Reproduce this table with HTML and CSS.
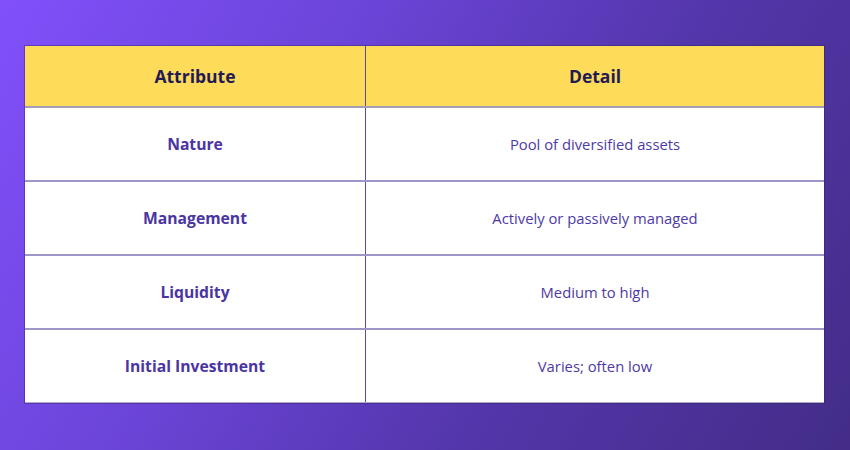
FILE: index.html
```html
<!DOCTYPE html>
<html>
<head>
<meta charset="utf-8">
<link rel="stylesheet" href="styles.css">
</head>
<body>
<div class="page">
  <table class="grid">
    <thead>
      <tr><th class="c1">Attribute</th><th class="c2">Detail</th></tr>
    </thead>
    <tbody>
      <tr><td class="c1">Nature</td><td class="c2">Pool of diversified assets</td></tr>
      <tr><td class="c1">Management</td><td class="c2">Actively or passively managed</td></tr>
      <tr><td class="c1">Liquidity</td><td class="c2">Medium to high</td></tr>
      <tr><td class="c1">Initial Investment</td><td class="c2">Varies; often low</td></tr>
    </tbody>
  </table>
</div>
</body>
</html>
```
FILE: styles.css
```css
html, body { margin: 0; padding: 0; }
body {
  width: 850px;
  height: 450px;
  overflow: hidden;
  font-family: "Open Sans", "Liberation Sans", sans-serif;
}
.page {
  width: 850px;
  height: 450px;
  box-sizing: border-box;
  padding: 46px 26px 0 25px;
  background: linear-gradient(120deg, #8150fb 0%, #6a44d6 35%, #5336aa 65%, #432d88 100%);
}
.grid {
  width: 799px;
  border-collapse: collapse;
  background: #ffffff;
  outline: 1px solid rgba(40, 30, 80, 0.35);
}
.grid th, .grid td {
  text-align: center;
  vertical-align: middle;
  padding: 0;
}
.grid th {
  height: 60px;
  background: #fedc5a;
  color: #231a55;
  font-size: 17.5px;
  font-weight: 700;
  border-bottom: 2px solid #a39cb6;
}
.grid td {
  height: 72px;
  border-bottom: 2px solid #9e96c9;
  color: #4a35a2;
}
.grid tbody tr:last-child td { border-bottom: 1px solid #b0aac6; }
.grid .c1 { width: 340px; border-right: 1px solid #5a4aa0; }
.grid td.c1 { font-size: 15.7px; font-weight: 700; }
.grid td.c2 { font-size: 14.8px; font-weight: 400; color: #4d3aa6; }
```
